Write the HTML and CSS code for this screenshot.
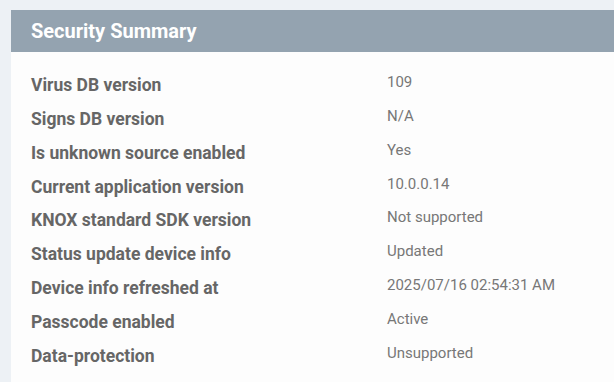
FILE: index.html
```html
<!DOCTYPE html>
<html>
<head>
<meta charset="utf-8">
<link rel="stylesheet" href="styles.css">
</head>
<body>
<section class="card">
  <header class="card-header">Security Summary</header>
  <div class="card-body">
    <div class="row"><div class="label">Virus DB version</div><div class="value">109</div></div>
    <div class="row"><div class="label">Signs DB version</div><div class="value">N/A</div></div>
    <div class="row"><div class="label">Is unknown source enabled</div><div class="value">Yes</div></div>
    <div class="row"><div class="label">Current application version</div><div class="value">10.0.0.14</div></div>
    <div class="row"><div class="label">KNOX standard SDK version</div><div class="value">Not supported</div></div>
    <div class="row"><div class="label">Status update device info</div><div class="value">Updated</div></div>
    <div class="row"><div class="label">Device info refreshed at</div><div class="value">2025/07/16 02:54:31 AM</div></div>
    <div class="row"><div class="label">Passcode enabled</div><div class="value">Active</div></div>
    <div class="row"><div class="label">Data-protection</div><div class="value">Unsupported</div></div>
  </div>
</section>
</body>
</html>
```
FILE: styles.css
```css
html, body {
  margin: 0;
  padding: 0;
  background: #edf1f5;
  font-family: Roboto, "Liberation Sans", sans-serif;
}
body {
  padding: 10px 0 0 11px;
  height: 382px;
  box-sizing: border-box;
  overflow: hidden;
}
.card {
  background: #fdfdfd;
  height: 100%;
}
.card-header {
  background: #94a3b0;
  color: #ffffff;
  font-weight: 700;
  font-size: 20px;
  height: 42px;
  line-height: 42px;
  padding-left: 20px;
}
.card-body {
  padding: 21px 0 0 20px;
}
.row {
  display: grid;
  grid-template-columns: 356px 1fr;
  align-items: start;
  height: 33.85px;
}
.label {
  font-weight: 700;
  font-size: 17.5px;
  color: #666666;
  line-height: 24px;
}
.value {
  font-size: 15px;
  color: #777777;
  line-height: 18px;
}
```
